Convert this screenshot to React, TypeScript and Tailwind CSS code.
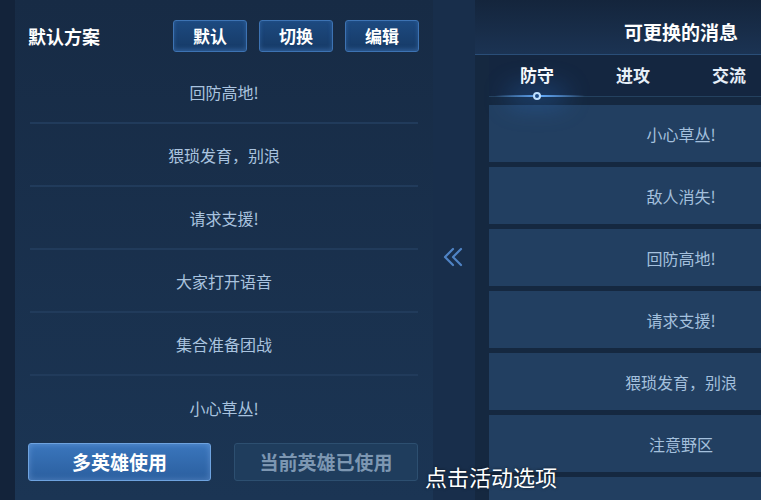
import React from 'react';

const leftMessages = ['回防高地!', '猥琐发育，别浪', '请求支援!', '大家打开语音', '集合准备团战', '小心草丛!'];
const rightMessages = ['小心草丛!', '敌人消失!', '回防高地!', '请求支援!', '猥琐发育，别浪', '注意野区', ''];
const tabs = ['防守', '进攻', '交流'];

const font = { fontFamily: '"Noto Sans CJK SC", "Noto Sans", sans-serif' };

const TopButton: React.FC<{ label: string }> = ({ label }) => (
    <button className="w-[74px] h-8 rounded-[3px] border border-[#3d73b3] bg-gradient-to-b from-[#1d4a80] to-[#163a66] text-white text-[17px] font-bold shadow-[inset_0_-2px_4px_rgba(90,150,230,0.35)]">
        {label}
    </button>
);

const App: React.FC = () => {
    return (
        <div style={font} className="relative w-[761px] h-[500px] overflow-hidden bg-[#13233a] flex">
            {/* left panel */}
            <div className="ml-[15px] w-[418px] flex flex-col bg-gradient-to-b from-[#172b45] to-[#1b3554]">
                <div className="h-[61px] shrink-0 pt-5 pl-[13px] pr-[14px] flex items-start justify-between">
                    <span className="text-white text-[18px] font-bold leading-8">默认方案</span>
                    <div className="flex gap-3">
                        <TopButton label="默认" />
                        <TopButton label="切换" />
                        <TopButton label="编辑" />
                    </div>
                </div>
                <div className="flex flex-col px-[15px]">
                    {leftMessages.map((msg, i) => (
                        <div
                            key={msg}
                            className={`h-[63px] shrink-0 flex items-center justify-center text-[16px] text-[#a9c3df] ${i < leftMessages.length - 1 ? 'border-b-2 border-[#213b5b]' : ''}`}
                        >
                            {msg}
                        </div>
                    ))}
                </div>
                <div className="flex gap-[23px] pl-[13px] pr-[15px] mt-[4px]">
                    <button className="w-[183px] h-[38px] rounded-[3px] border border-[#6ea3e0] bg-gradient-to-b from-[#3a76bd] to-[#2b5f9f] text-white text-[19px] font-bold shadow-[inset_0_0_6px_rgba(160,200,255,0.35)]">
                        多英雄使用
                    </button>
                    <button className="w-[184px] h-[38px] rounded-[3px] border border-[#2d4f70] bg-[#1f3d5d] text-[#7d97b2] text-[19px] font-bold">
                        当前英雄已使用
                    </button>
                </div>
            </div>

            {/* middle strip */}
            <div className="w-[42px] bg-[#182e4b] flex items-center justify-center pt-[14px]">
                <svg width="24" height="20" viewBox="0 0 24 20" fill="none" stroke="#4f83c4" strokeWidth="2.2" strokeLinecap="round" strokeLinejoin="round">
                    <path d="M11 2 L3 10 L11 18" />
                    <path d="M19 2 L11 10 L19 18" />
                </svg>
            </div>

            {/* right panel */}
            <div className="flex-1 flex flex-col overflow-hidden bg-[#152840]">
                <div className="h-[55px] shrink-0 flex items-center pt-[10px] pl-[14px] bg-gradient-to-b from-[#14253c] to-[#1b3353] border-b border-[#2a4e78]">
                    <div className="w-[384px] shrink-0 text-center text-white text-[19px] font-bold">可更换的消息</div>
                </div>
                <div className="relative h-[42px] shrink-0 ml-[14px] bg-[#142640] flex items-start border-b border-[#24415f]">
                    {tabs.map((t, i) => (
                        <div
                            key={t}
                            className={`w-[96px] shrink-0 pt-[7px] text-center text-[17px] font-bold ${i === 0 ? 'text-white' : 'text-[#e6eef7]'}`}
                        >
                            {t}
                        </div>
                    ))}
                    <div className="absolute left-[6px] bottom-[-1px] w-[90px] h-[2px] bg-gradient-to-r from-transparent via-[#6fb4ff] to-transparent" />
                    <div className="absolute left-[18px] bottom-[-10px] w-[60px] h-[20px] rounded-full bg-[#2f7fe0]/30 blur-md" />
                    <div className="absolute left-[44px] bottom-[-4px] w-[8px] h-[8px] rounded-full border-2 border-[#bfe0ff] bg-[#1a4a86]" />
                </div>
                <div className="flex flex-col gap-[5px] pt-[8px] pl-[14px]">
                    {rightMessages.map((msg, i) => (
                        <div
                            key={i}
                            className="w-[384px] h-[57px] shrink-0 flex items-center justify-center bg-[#223f61] text-[16px] text-[#a4c0dd]"
                        >
                            {msg}
                        </div>
                    ))}
                </div>
            </div>

            {/* caption overlay */}
            <div className="absolute left-[425px] top-[465px] text-white text-[22px] leading-none [text-shadow:0_0_3px_rgba(0,0,0,0.6)]">
                点击活动选项
            </div>
        </div>
    );
};

export default App;
